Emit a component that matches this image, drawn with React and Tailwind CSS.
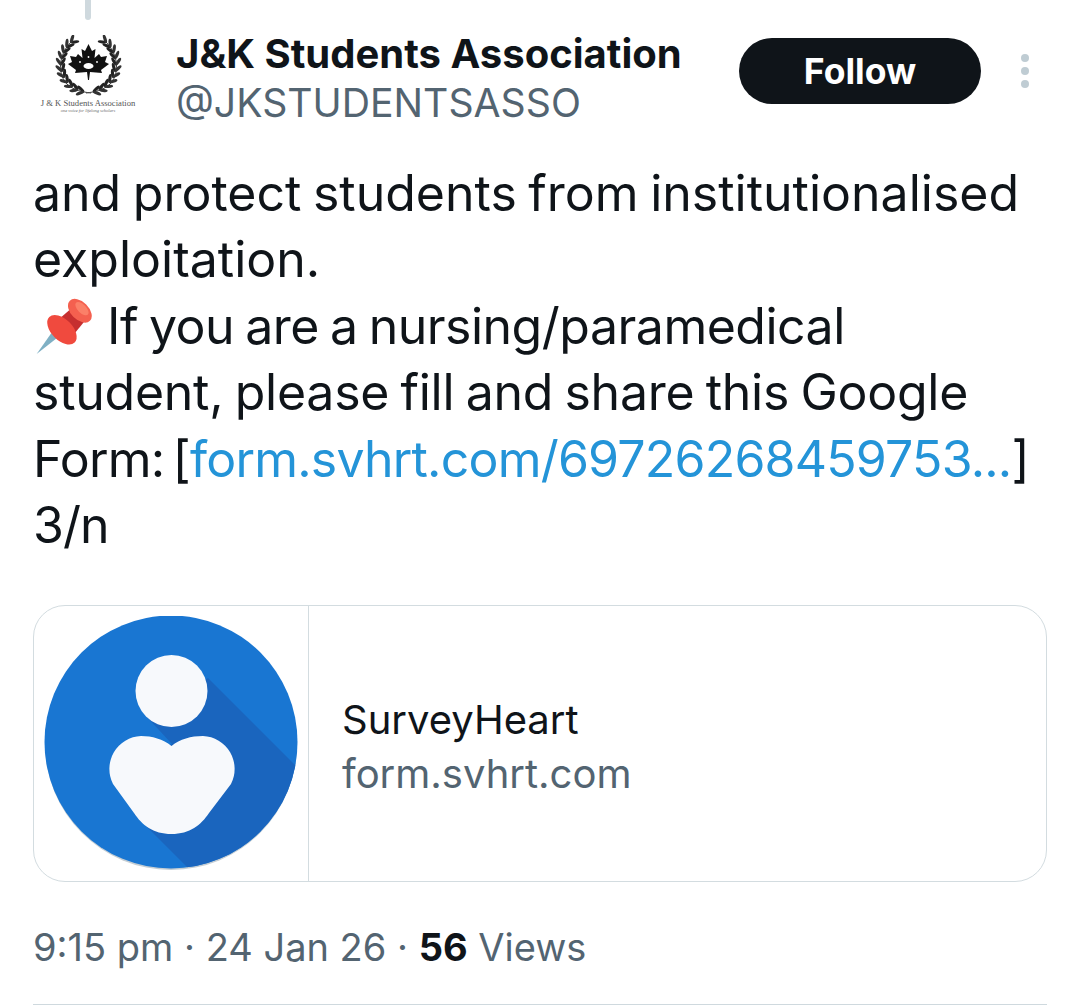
const sprigs = [0, 1, 2, 3, 4, 5, 6, 7, 8, 9, 10];

function Sprig({ flip }) {
  return (
    <g transform={flip ? "translate(73 0) scale(-1 1)" : undefined}>
      <path d="M19 7 C6 20 5 40 16 50 C22 55 30 57 39 58" fill="none" stroke="#444" strokeWidth="1" />
      {sprigs.map((i) => {
        const deg = 130 + i * 13;
        const a = (deg * Math.PI) / 180;
        const x = 36.5 + 27.5 * Math.cos(a);
        const y = 29 - 28 * Math.sin(a);
        const r = 270 - deg + 180;
        return (
          <g key={i}>
            <ellipse cx={x + 4} cy={y} rx="4.5" ry="1.6" fill="#222" transform={`rotate(${r + 32} ${x} ${y})`} />
            <ellipse cx={x + 4} cy={y} rx="4.5" ry="1.6" fill="#333" transform={`rotate(${r - 32} ${x} ${y})`} />
          </g>
        );
      })}
    </g>
  );
}

function Logo() {
  return (
    <div className="flex w-[100px] flex-col items-center">
      <svg width="73" height="62" viewBox="0 0 73 62">
        <Sprig />
        <Sprig flip />
        {/* maple leaf */}
        <path
          d="M36.5 9 L40 16 L43.5 14 L42.5 23 L47 19 L49 22 L55 21 L53 27 L57 29 L49 35 L50 38 L38 37 L37 45 L36 45 L35 37 L23 38 L24 35 L16 29 L20 27 L18 21 L24 22 L26 19 L30.5 23 L29.5 14 L33 16 Z"
          fill="#111"
        />
        <ellipse cx="36.5" cy="31" rx="5" ry="3" fill="#fff" />
        <circle cx="36.5" cy="22" r="0.9" fill="#fff" />
        <circle cx="28" cy="27" r="0.9" fill="#fff" />
        <circle cx="45" cy="27" r="0.9" fill="#fff" />
      </svg>
      <p className="mt-[1px] whitespace-nowrap font-['Liberation_Serif',serif] text-[8.6px] leading-[10px] text-[#555]">
        J &amp; K Students Association
      </p>
      <p className="whitespace-nowrap font-['Liberation_Serif',serif] text-[4.5px] italic leading-[5px] text-[#666]">
        one voice for lifelong scholars
      </p>
    </div>
  );
}

function PinEmoji() {
  return (
    <svg width="60" height="58" viewBox="0 0 56 55" className="mr-[14px] inline-block align-[-10px]">
      <path d="M3 55 L17 35 L22 40 Z" fill="#7fb0c4" />
      <path d="M24 22 L38 10 L50 22 L37 38 Z" fill="#c62f2f" />
      <ellipse cx="27" cy="32" rx="10" ry="17" fill="#f04a3e" transform="rotate(-45 27 32)" />
      <ellipse cx="44" cy="14" rx="8.5" ry="13.5" fill="#f4604f" transform="rotate(-45 44 14)" />
      <ellipse cx="46" cy="12" rx="4" ry="8" fill="#fb8068" transform="rotate(-45 46 12)" />
    </svg>
  );
}

function CardIcon() {
  return (
    <svg width="254" height="256" viewBox="0 0 254 256">
      <defs>
        <clipPath id="disc">
          <circle cx="127" cy="126" r="126.5" />
        </clipPath>
      </defs>
      <ellipse cx="127" cy="128" rx="126" ry="126" fill="#8a9ba8" opacity="0.5" />
      <circle cx="127" cy="126" r="126.5" fill="#1976d2" />
      <path d="M164 62 L270 168 V270 H162 L90 198 L100 140 L128 128 L102 100 Z" fill="#1a65be" clipPath="url(#disc)" />
      <circle cx="127.5" cy="75" r="36" fill="#f7f9fc" />
      <path
        d="M127.5 130 C136 123 147 120 159 120 A33 33 0 0 1 187 168 L165 197 C157 209 146 218 127.5 218 C109 218 98 209 90 197 L69 168 A33 33 0 0 1 97 120 C108 120 119 123 127.5 130 Z"
        fill="#f7f9fc"
      />
    </svg>
  );
}

export default function App() {
  return (
    <div className="h-[1005px] w-[1080px] overflow-hidden bg-white font-['Inter',sans-serif] text-[#0f1419]">
      <div className="ml-[85px] h-[20px] w-[6px] rounded-b-full bg-[#cfd9de]" />

      <div className="flex h-[104px] items-center px-[34px] pt-[3px]">
        <div className="ml-[4px] flex w-[138px] shrink-0 pt-[1px]">
          <Logo />
        </div>
        <div className="mt-[8px] min-w-0 flex-1">
          <p className="whitespace-nowrap text-[40px] font-bold leading-[50px]">J&amp;K Students Association</p>
          <p className="text-[39.2px] leading-[48px] text-[#536471]">@JKSTUDENTSASSO</p>
        </div>
        <button className="mb-[6px] flex h-[66px] w-[242px] items-center justify-center rounded-full bg-[#0f1419] pt-[2px] text-[35.5px] font-bold text-white">
          Follow
        </button>
        <div className="mb-[6px] ml-[40px] mr-[17px] flex flex-col gap-[5px]">
          <span className="h-[8px] w-[8px] rounded-full bg-[#bfccd3]" />
          <span className="h-[8px] w-[8px] rounded-full bg-[#bfccd3]" />
          <span className="h-[8px] w-[8px] rounded-full bg-[#bfccd3]" />
        </div>
      </div>

      <div className="mt-[36px] px-[33px] text-[50px] leading-[66.4px] [word-spacing:-2.5px]">
        <p className="whitespace-nowrap">and protect students from institutionalised</p>
        <p>exploitation.</p>
        <p className="whitespace-nowrap tracking-[-0.5px]">
          <PinEmoji />
          If you are a nursing/paramedical
        </p>
        <p className="whitespace-nowrap tracking-[-0.25px]">student, please fill and share this Google</p>
        <p className="whitespace-nowrap tracking-[-0.8px] [word-spacing:-5px]">
          Form: [<span className="text-[#2494d8]">form.svhrt.com/69726268459753...</span>]
        </p>
        <p className="tracking-[-1px]">3/n</p>
      </div>

      <div className="mx-[33px] mt-[47px] flex h-[277px] overflow-hidden rounded-[32px] border border-[#d3dce0]">
        <div className="flex w-[275px] shrink-0 items-center justify-center border-r border-[#d3dce0] pr-[1px]">
          <CardIcon />
        </div>
        <div className="mt-[6px] flex flex-1 flex-col justify-center pl-[33px] text-[40px] leading-[54px]">
          <p>SurveyHeart</p>
          <p className="text-[#536471]">form.svhrt.com</p>
        </div>
      </div>

      <p className="mt-[37px] px-[33px] text-[38px] leading-[56px] text-[#536471]">
        9:15 pm · 24 Jan 26 · <span className="font-bold text-[#0f1419]">56</span> Views
      </p>

      <div className="mx-[33px] mt-[29px] border-t border-[#cfd9de]" />
    </div>
  );
}
